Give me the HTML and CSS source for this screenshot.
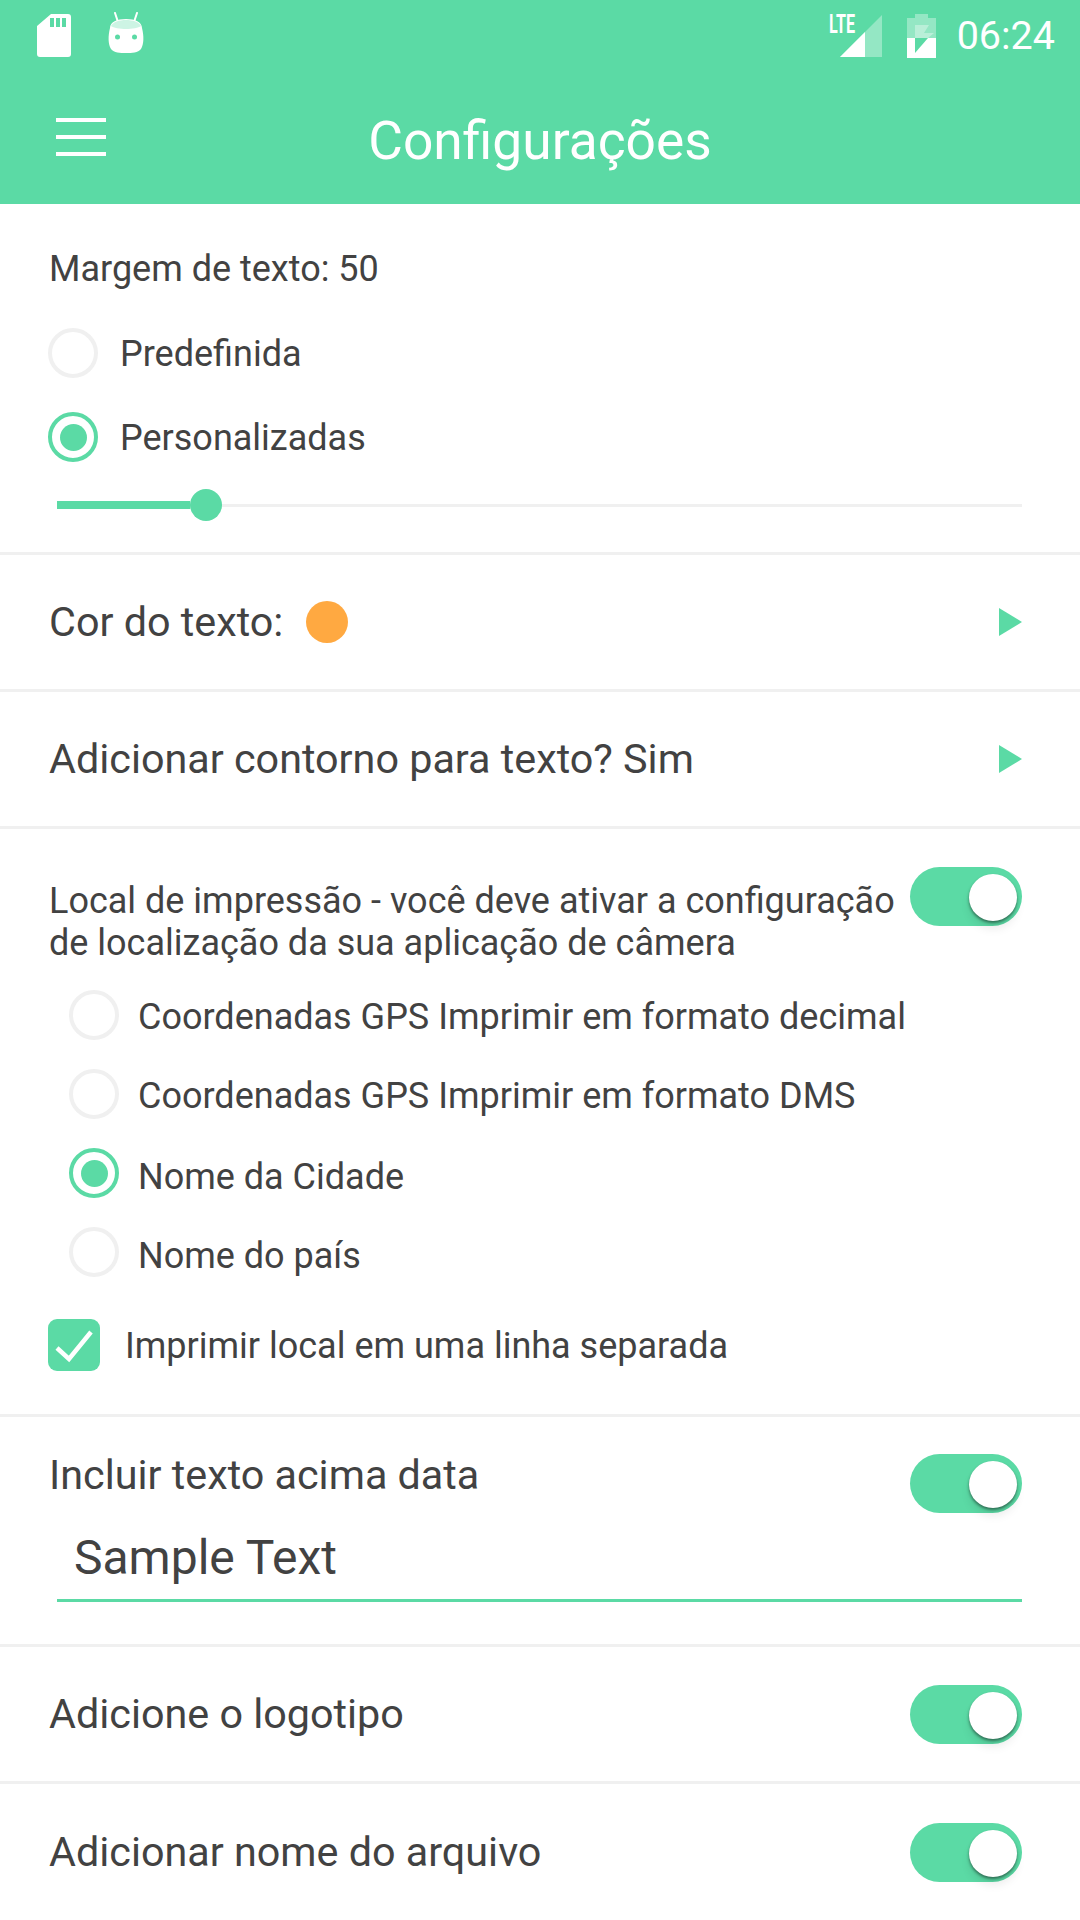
FILE: index.html
```html
<!DOCTYPE html>
<html lang="pt">
<head>
    <meta charset="UTF-8">
    <meta name="viewport" content="width=device-width, initial-scale=1.0">
    <title>Configurações</title>
    <link rel="stylesheet" href="styles.css">
</head>
<body>
    <header class="header">
        <div class="status-bar">
            <svg class="sd-icon" width="34" height="43" viewBox="0 0 34 43">
                <path fill="#fff" fill-rule="evenodd" d="M14 0H31Q34 0 34 3V40Q34 43 31 43H3Q0 43 0 40V12ZM13 4V13H17V4ZM19 4V13H23V4ZM25 4V13H29V4Z"/>
            </svg>
            <svg class="android-icon" width="36" height="42" viewBox="0 0 36 42">
                <path fill="none" stroke="#fff" stroke-width="2" stroke-linecap="round" d="M7 1L10 10M29 1L26 10"/>
                <path fill="#fff" d="M2 16C2 10 9 7 18 7S34 10 34 16C36 24 36 32 33 37C30 41 24 41 18 41S6 41 3 37C0 32 0 24 2 16Z"/>
                <path fill="#5bdaa5" fill-opacity="0.3" d="M3 14C5 10 11 8 18 8S31 10 33 14C28 18 8 18 3 14Z"/>
                <circle cx="9.500" cy="25" r="2.500" fill="#5bdaa5"/>
                <circle cx="26.500" cy="25" r="2.500" fill="#5bdaa5"/>
            </svg>
            <div class="status-right">
                <svg class="signal-icon" width="65" height="58" viewBox="-10 -14 65 58">
                    <path fill="#fff" fill-opacity="0.35" d="M55 1V43H13Z"/>
                    <path fill="#fff" d="M38 18V43H13Z"/>
                    <text x="2" y="19" class="lte-text" textLength="26" lengthAdjust="spacingAndGlyphs">LTE</text>
                </svg>
                <svg class="battery-icon" width="29" height="44" viewBox="0 0 29 44">
                    <path fill="#fff" fill-opacity="0.35" d="M8 0H21V4H29V24H0V4H8Z"/>
                    <path fill="#fff" fill-opacity="0.35" d="M8 11H22L17 19H27L21 24H8Z"/>
                    <path fill="#fff" d="M0 24H29V44H0Z"/>
                    <path fill="#5bdaa5" d="M8 24H21L8 39Z"/>
                </svg>
                <span class="clock">06:24</span>
            </div>
        </div>
        <div class="toolbar">
            <div class="menu-btn">
                <span></span>
                <span></span>
                <span></span>
            </div>
            <h1 class="title">Configurações</h1>
        </div>
    </header>

    <section class="block block-margin">
        <div class="small-text">Margem de texto: 50</div>
        <div class="radio-list">
            <div class="radio-row">
                <span class="radio"></span>
                <span class="small-text">Predefinida</span>
            </div>
            <div class="radio-row">
                <span class="radio checked"></span>
                <span class="small-text">Personalizadas</span>
            </div>
        </div>
        <div class="slider">
            <div class="slider-fill"></div>
            <div class="slider-thumb"></div>
            <div class="slider-rest"></div>
        </div>
    </section>

    <section class="block row">
        <div class="row-label">
            <span class="big-text">Cor do texto:</span>
            <span class="color-dot"></span>
        </div>
        <span class="arrow"></span>
    </section>

    <section class="block row">
        <span class="big-text">Adicionar contorno para texto? Sim</span>
        <span class="arrow"></span>
    </section>

    <section class="block block-local">
        <div class="local-head">
            <div class="small-text local-text">Local de impressão - você deve ativar a configuração de localização da sua aplicação de câmera</div>
            <span class="toggle"><span class="knob"></span></span>
        </div>
        <div class="radio-list nested">
            <div class="radio-row">
                <span class="radio"></span>
                <span class="small-text">Coordenadas GPS Imprimir em formato decimal</span>
            </div>
            <div class="radio-row">
                <span class="radio"></span>
                <span class="small-text">Coordenadas GPS Imprimir em formato DMS</span>
            </div>
            <div class="radio-row">
                <span class="radio checked"></span>
                <span class="small-text">Nome da Cidade</span>
            </div>
            <div class="radio-row">
                <span class="radio"></span>
                <span class="small-text">Nome do país</span>
            </div>
        </div>
        <div class="check-row">
            <span class="checkbox">
                <svg width="40" height="36" viewBox="0 0 40 36">
                    <path fill="none" stroke="#fff" stroke-width="4.500" d="M3 21L15 32L37 5"/>
                </svg>
            </span>
            <span class="small-text">Imprimir local em uma linha separada</span>
        </div>
    </section>

    <section class="block block-text">
        <div class="text-head">
            <span class="big-text">Incluir texto acima data</span>
            <span class="toggle"><span class="knob"></span></span>
        </div>
        <div class="text-field">Sample Text</div>
    </section>

    <section class="block row">
        <span class="big-text">Adicione o logotipo</span>
        <span class="toggle"><span class="knob"></span></span>
    </section>

    <section class="block row last">
        <span class="big-text">Adicionar nome do arquivo</span>
        <span class="toggle"><span class="knob"></span></span>
    </section>
</body>
</html>
```

FILE: styles.css
```css
* {
    box-sizing: border-box;
}
body {
    margin: 0;
    padding: 0;
    width: 1080px;
    height: 1920px;
    overflow: hidden;
    background-color: #fff;
    color: #424242;
    font-family: Roboto, sans-serif;
}
.header {
    height: 204px;
    background-color: #5bdaa5;
    color: #fff;
}
.status-bar {
    height: 72px;
    display: flex;
    align-items: flex-start;
    padding: 14px 25px 0 37px;
}
.android-icon {
    margin-left: 37px;
    margin-top: -2px;
}
.status-right {
    margin-left: auto;
    display: flex;
    align-items: flex-start;
}
.lte-text {
    fill: #fff;
    font-family: Roboto, sans-serif;
    font-weight: 700;
    font-size: 25px;
}
.signal-icon {
    margin: -14px 25px 0 0;
}
.battery-icon {
    margin-right: 21px;
}
.clock {
    font-size: 39.500px;
    line-height: 44px;
    font-weight: 400;
}
.toolbar {
    height: 132px;
    display: flex;
    align-items: center;
    justify-content: center;
    position: relative;
}
.menu-btn {
    position: absolute;
    left: 56px;
    top: 46px;
    width: 50px;
    display: flex;
    flex-direction: column;
    gap: 13px;
}
.menu-btn span {
    height: 4px;
    background-color: #fff;
}
.title {
    margin: 5px 0 0;
    font-size: 53.300px;
    font-weight: 400;
    line-height: 60px;
}
.block {
    border-bottom: 3px solid #f0f0f0;
    padding: 0 58px 0 48px;
}
.small-text {
    font-size: 36px;
    line-height: 42px;
}
.big-text {
    font-size: 41.300px;
    line-height: 48px;
    margin-left: 1px;
}
.block-margin {
    height: 351px;
    padding-top: 44px;
}
.block-margin > .small-text {
    margin-left: 1px;
}
.radio-list {
    margin-top: 38px;
    display: flex;
    flex-direction: column;
    gap: 34px;
}
.radio-row {
    display: flex;
    align-items: center;
    gap: 22px;
    height: 50px;
}
.radio-row .small-text {
    padding-top: 2px;
}
.radio {
    width: 50px;
    height: 50px;
    flex: none;
    border-radius: 50%;
    border: 4px solid #f0f0f0;
    display: flex;
    align-items: center;
    justify-content: center;
}
.radio.checked {
    border-color: #5bdaa5;
}
.radio.checked::after {
    content: "";
    width: 27px;
    height: 27px;
    border-radius: 50%;
    background-color: #5bdaa5;
}
.slider {
    margin: 27px 0 0 9px;
    display: flex;
    align-items: center;
    height: 32px;
}
.slider-fill {
    width: 133px;
    height: 8px;
    background-color: #5bdaa5;
}
.slider-thumb {
    width: 32px;
    height: 32px;
    flex: none;
    border-radius: 50%;
    background-color: #5bdaa5;
}
.slider-rest {
    flex: 1;
    height: 3px;
    background-color: #f0f0f0;
}
.row {
    height: 137px;
    display: flex;
    align-items: center;
    justify-content: space-between;
}
.row.last {
    border-bottom: none;
    height: 136px;
}
.row-label {
    display: flex;
    align-items: center;
    gap: 23px;
}
.color-dot {
    width: 42px;
    height: 42px;
    border-radius: 50%;
    background-color: #ffa941;
}
.arrow {
    width: 0;
    height: 0;
    border-left: 23px solid #5bdaa5;
    border-top: 14.500px solid transparent;
    border-bottom: 14.500px solid transparent;
}
.toggle {
    width: 112px;
    height: 59px;
    flex: none;
    border-radius: 30px;
    background-color: #5bdaa5;
    display: flex;
    align-items: flex-start;
    justify-content: flex-end;
    padding: 7px 5px 0 0;
}
.knob {
    width: 48px;
    height: 47px;
    border-radius: 50%;
    background-color: #fff;
    box-shadow: 0 2px 3px rgba(0, 0, 0, 0.45), 0 8px 10px rgba(0, 0, 0, 0.08);
}
.block-local {
    height: 588px;
    padding-top: 38px;
}
.local-head {
    display: flex;
    align-items: flex-start;
    justify-content: space-between;
}
.local-text {
    margin: 13px 0 0 1px;
    width: 860px;
}
.radio-list.nested {
    margin: 26px 0 0 21px;
    gap: 29px;
}
.radio-list.nested .radio-row {
    gap: 19px;
}
.radio-list.nested .small-text {
    padding-top: 4px;
}
.radio-list.nested .radio-row:nth-child(n+3) .small-text {
    padding-top: 7px;
}
.check-row {
    margin-top: 42px;
    display: flex;
    align-items: center;
    gap: 25px;
}
.check-row .small-text {
    padding-top: 2px;
}
.checkbox {
    width: 52px;
    height: 52px;
    flex: none;
    border-radius: 9px;
    background-color: #5bdaa5;
    display: flex;
    align-items: center;
    justify-content: center;
}
.block-text {
    height: 230px;
    padding-top: 34px;
}
.text-head {
    display: flex;
    align-items: flex-start;
    justify-content: space-between;
}
.text-head .toggle {
    margin-top: 3px;
}
.text-field {
    margin: 15px 0 0 9px;
    padding-left: 17px;
    height: 74px;
    border-bottom: 3px solid #5bdaa5;
    font-size: 48px;
    line-height: 60px;
}
```
